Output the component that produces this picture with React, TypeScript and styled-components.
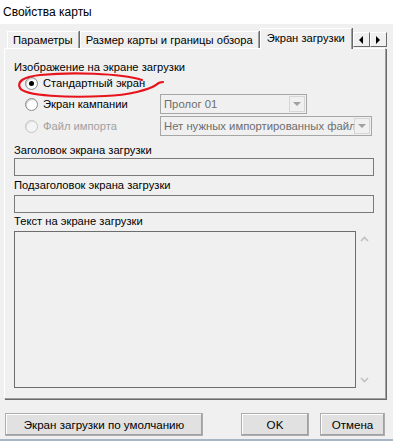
import React from "react";
import styled, { createGlobalStyle } from "styled-components";

const Global = createGlobalStyle`
  html, body { margin: 0; padding: 0; background: #f0f0f0; }
  * { box-sizing: border-box; }
`;

const Window = styled.div`
  width: 393px;
  height: 441px;
  background: #f0f0f0;
  font-family: "Liberation Sans", Arial, sans-serif;
  font-size: 11.2px;
  color: #000;
  display: flex;
  flex-direction: column;
  position: relative;
  overflow: hidden;
  border-bottom: 2px solid #a9b6c6;
`;

const TitleBar = styled.div`
  height: 24px;
  flex: none;
  background: #fff;
  padding-left: 3px;
  padding-bottom: 1px;
  display: flex;
  align-items: center;
  font-size: 12px;
`;

const TabStrip = styled.div`
  height: 24px;
  flex: none;
  display: flex;
  align-items: flex-end;
  padding-left: 7px;
  padding-right: 7px;
  position: relative;
`;

const Tab = styled.div<{ $active?: boolean }>`
  height: ${(p) => (p.$active ? 21 : 17)}px;
  padding: 0 ${(p) => (p.$active ? 6 : 5)}px ${(p) => (p.$active ? 3 : 0)}px;
  margin-bottom: ${(p) => (p.$active ? -1 : 0)}px;
  z-index: ${(p) => (p.$active ? 2 : 1)};
  display: flex;
  align-items: center;
  background: #f0f0f0;
  border-top: 1px solid #fff;
  border-left: 1px solid #fff;
  border-right: 1px solid #a0a0a0;
  box-shadow: 1px 0 0 #696969;
  margin-right: 1px;
  white-space: nowrap;
  position: relative;
`;

const ScrollArrows = styled.div`
  display: flex;
  margin-left: auto;
  margin-bottom: 1px;
`;

const ArrowButton = styled.div`
  width: 17px;
  height: 15px;
  background: #f0f0f0;
  border-top: 1px solid #fff;
  border-left: 1px solid #fff;
  border-right: 1px solid #696969;
  border-bottom: 1px solid #696969;
  display: flex;
  align-items: center;
  justify-content: center;
`;

const Panel = styled.div`
  margin: 0 7px 0 4px;
  height: 351px;
  flex: none;
  border-top: 1px solid #fff;
  border-left: 1px solid #fff;
  border-right: 1px solid #a0a0a0;
  border-bottom: 1px solid #a0a0a0;
  box-shadow: 1px 1px 0 #696969;
  padding: 11px 12px 0 9px;
  display: flex;
  flex-direction: column;
  position: relative;
  & > * { flex-shrink: 0; }
`;

const Label = styled.div<{ $disabled?: boolean; $mt?: number }>`
  line-height: 14px;
  height: 14px;
  margin-top: ${(p) => p.$mt ?? 0}px;
  color: ${(p) => (p.$disabled ? "#a0a0a0" : "#000")};
  white-space: nowrap;
`;

const RadioGrid = styled.div`
  display: grid;
  grid-template-columns: 135px 1fr;
  grid-template-rows: 18px 20px 20px;
  row-gap: 2px;
  padding-left: 11px;
  align-items: center;
`;

const RadioRow = styled.div`
  display: flex;
  align-items: center;
  gap: 5px;
`;

const RadioCircle = styled.div<{ $checked?: boolean; $disabled?: boolean }>`
  width: 13px;
  height: 13px;
  flex: none;
  border-radius: 50%;
  border: 1px solid ${(p) => (p.$disabled ? "#c4c4c4" : "#8a8a8a")};
  background: ${(p) => (p.$disabled ? "#f4f4f4" : "#fff")};
  box-shadow: inset 1px 1px 0 ${(p) => (p.$disabled ? "#e0e0e0" : "#d0d0d0")};
  display: flex;
  align-items: center;
  justify-content: center;
  &::after {
    content: "";
    display: ${(p) => (p.$checked ? "block" : "none")};
    width: 5px;
    height: 5px;
    border-radius: 50%;
    background: #000;
  }
`;

const Combo = styled.div<{ $width: number }>`
  width: ${(p) => p.$width}px;
  height: 20px;
  border: 1px solid #a6a6a6;
  background: #f0f0f0;
  display: flex;
  align-items: center;
  overflow: hidden;
`;

const ComboText = styled.div`
  flex: 1;
  padding-left: 3px;
  white-space: nowrap;
  overflow: hidden;
  color: #6d6d6d;
  font-size: 11.3px;
`;

const ComboButton = styled.div`
  width: 16px;
  height: 16px;
  margin-right: 1px;
  border: 1px solid #d6d6d6;
  background: #f0f0f0;
  display: flex;
  align-items: center;
  justify-content: center;
  flex: none;
`;

const TextBox = styled.div<{ $mt: number }>`
  height: 18px;
  border: 1px solid #7a7a7a;
  background: #f0f0f0;
  margin-top: ${(p) => p.$mt}px;
  width: 360px;
`;

const MemoRow = styled.div`
  display: flex;
  margin-top: 3px;
`;

const Memo = styled.div`
  width: 343px;
  height: 157px;
  border: 1px solid #6d6d6d;
  background: #f0f0f0;
`;

const ScrollCol = styled.div`
  width: 17px;
  display: flex;
  flex-direction: column;
  justify-content: space-between;
  align-items: center;
  padding: 5px 0 5px 0;
`;

const Footer = styled.div`
  display: flex;
  align-items: center;
  padding: 14px 8px 0 5px;
`;

const Button = styled.div<{ $width: number; $ml?: number }>`
  width: ${(p) => p.$width}px;
  height: 23px;
  margin-left: ${(p) => p.$ml ?? 0}px;
  background: #e1e1e1;
  border: 1px solid #adadad;
  box-shadow: inset -1px -1px 0 #a0a0a0, inset 1px 1px 0 #fff;
  display: flex;
  align-items: center;
  justify-content: center;
  white-space: nowrap;
  font-size: 11.6px;
`;

const Annotation = styled.svg`
  position: absolute;
  left: 0;
  top: 0;
  pointer-events: none;
`;

const Tri = ({ dir, color = "#000" }: { dir: "left" | "right" | "down"; color?: string }) => {
  const pts =
    dir === "left" ? "5,1 5,9 1,5" : dir === "right" ? "1,1 1,9 5,5" : "0,1 8,1 4,5";
  const w = dir === "down" ? 8 : 6;
  const h = dir === "down" ? 6 : 10;
  return (
    <svg width={w} height={h} viewBox={`0 0 ${w} ${h}`}>
      <polygon points={pts} fill={color} />
    </svg>
  );
};

const Chevron = ({ up }: { up?: boolean }) => (
  <svg width="9" height="6" viewBox="0 0 9 6">
    <polyline
      points={up ? "1,5 4.5,1.5 8,5" : "1,1 4.5,4.5 8,1"}
      fill="none"
      stroke="#c0c0c0"
      strokeWidth="1.6"
    />
  </svg>
);

export default function App() {
  return (
    <>
      <Global />
      <Window>
        <TitleBar>Свойства карты</TitleBar>
        <TabStrip>
          <Tab>Параметры</Tab>
          <Tab>Размер карты и границы обзора</Tab>
          <Tab $active>Экран загрузки</Tab>
          <ScrollArrows>
            <ArrowButton>
              <Tri dir="left" />
            </ArrowButton>
            <ArrowButton>
              <Tri dir="right" />
            </ArrowButton>
          </ScrollArrows>
        </TabStrip>
        <Panel>
          <Label>Изображение на экране загрузки</Label>
          <RadioGrid>
            <RadioRow>
              <RadioCircle $checked />
              <Label>Стандартный экран</Label>
            </RadioRow>
            <div />
            <RadioRow>
              <RadioCircle />
              <Label>Экран кампании</Label>
            </RadioRow>
            <Combo $width={147}>
              <ComboText>Пролог 01</ComboText>
              <ComboButton>
                <Tri dir="down" color="#a0a0a0" />
              </ComboButton>
            </Combo>
            <RadioRow>
              <RadioCircle $disabled />
              <Label $disabled>Файл импорта</Label>
            </RadioRow>
            <Combo $width={212}>
              <ComboText>Нет нужных импортированных файлов</ComboText>
              <ComboButton>
                <Tri dir="down" color="#a0a0a0" />
              </ComboButton>
            </Combo>
          </RadioGrid>
          <Label $mt={7}>Заголовок экрана загрузки</Label>
          <TextBox $mt={1} />
          <Label $mt={2}>Подзаголовок экрана загрузки</Label>
          <TextBox $mt={3} />
          <Label $mt={1}>Текст на экране загрузки</Label>
          <MemoRow>
            <Memo />
            <ScrollCol>
              <Chevron up />
              <Chevron />
            </ScrollCol>
          </MemoRow>
        </Panel>
        <Footer>
          <Button $width={198}>Экран загрузки по умолчанию</Button>
          <Button $width={68} $ml={38}>OK</Button>
          <Button $width={65} $ml={11}>Отмена</Button>
        </Footer>
        <Annotation width="393" height="441">
          <path
            d="M 142 80 C 120 73, 70 72, 40 75 C 22 77, 17 82, 20 88 C 24 96, 70 98, 105 96 C 130 95, 148 90, 156 85 C 158 83, 161 82, 163 82"
            fill="none"
            stroke="#e8141c"
            strokeWidth="2.2"
            strokeLinecap="round"
          />
        </Annotation>
      </Window>
    </>
  );
}
